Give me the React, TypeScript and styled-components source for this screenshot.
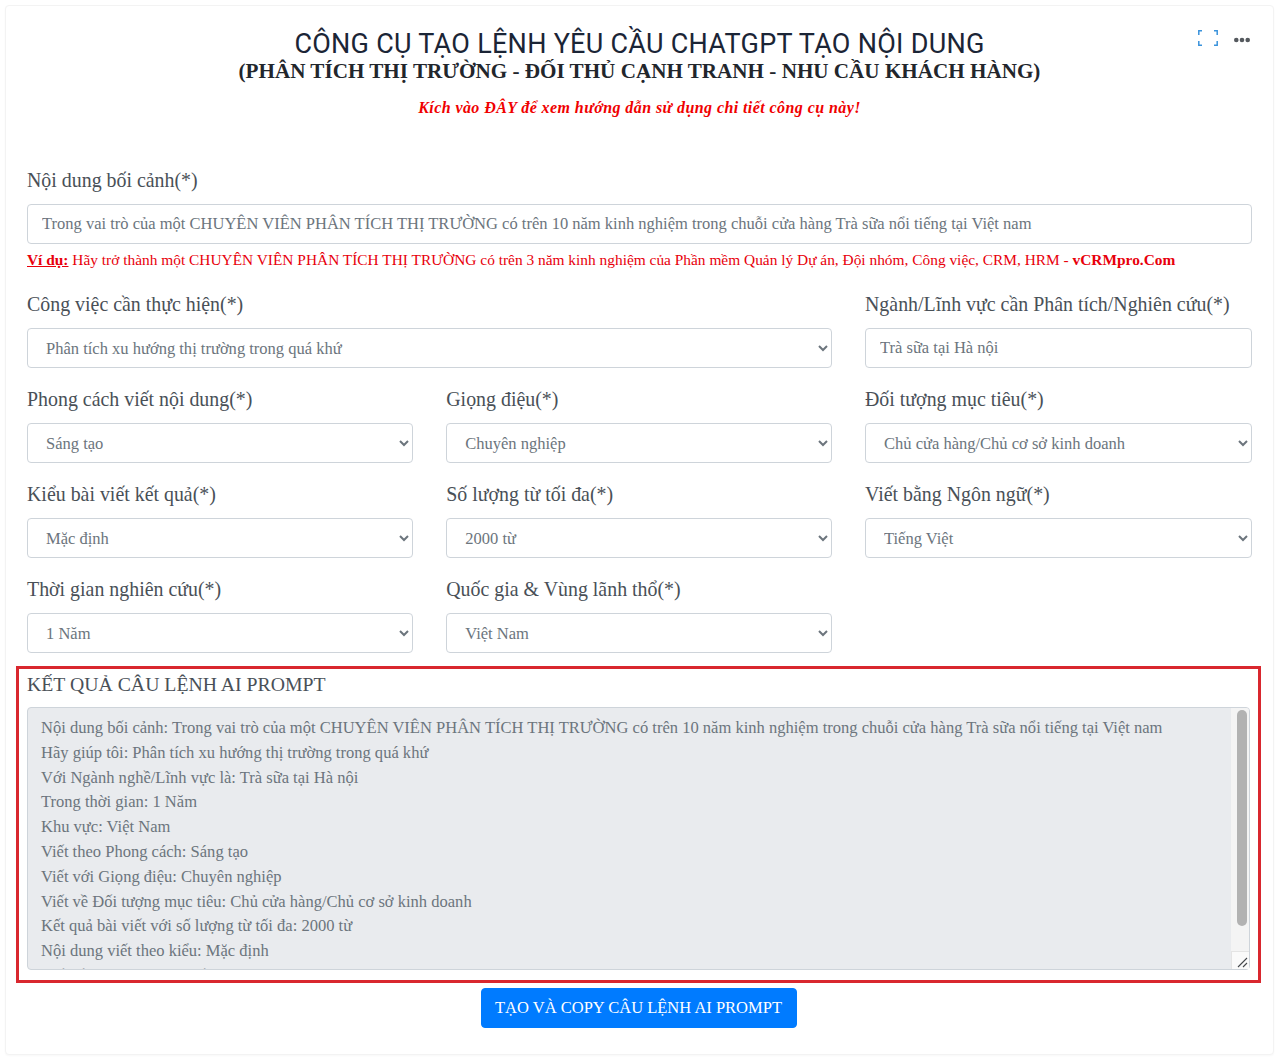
import React from 'react';
import styled, { createGlobalStyle } from 'styled-components';

const GlobalStyle = createGlobalStyle`
  html, body {
    margin: 0;
    padding: 0;
    background: #ffffff;
    font-family: "Liberation Serif", "Times New Roman", serif;
  }
  * {
    box-sizing: border-box;
  }
`;

const Page = styled.div`
  padding: 5px 6px 6px 5px;
  min-height: 1061px;
`;

const Card = styled.main`
  position: relative;
  height: 1050px;
  padding: 23px 21px 0 21px;
  background: #ffffff;
  border: 1px solid #f3f3f3;
  border-radius: 4px;
  box-shadow: 0 1px 2px rgba(0, 0, 0, 0.03);
`;

const Toolbar = styled.div`
  position: absolute;
  top: 24px;
  right: 23px;
  display: flex;
  align-items: center;
  gap: 16px;
`;

const Header = styled.header`
  text-align: center;
  height: 136px;
`;

const Title = styled.h1`
  margin: 0;
  font-family: "Roboto", "Liberation Sans", sans-serif;
  font-weight: 400;
  font-size: 27px;
  line-height: 30px;
  letter-spacing: 0.27px;
  color: #1b2536;
`;

const Subtitle = styled.h2`
  margin: 0 0 0 0;
  font-size: 21.13px;
  line-height: 25px;
  font-weight: 700;
  color: #22262c;
`;

const HelpLink = styled.a`
  display: block;
  margin-top: 12px;
  font-size: 16px;
  line-height: 24px;
  font-weight: 700;
  font-style: italic;
  letter-spacing: 0.42px;
  color: #f00000;
  text-decoration: none;
`;

const Field = styled.div`
  margin-bottom: 16px;
  min-width: 0;
`;

const Label = styled.label`
  display: block;
  height: 31px;
  margin-bottom: 8px;
  font-size: 19.9px;
  line-height: 30px;
  color: #495057;
`;

const TextInput = styled.input`
  display: block;
  width: 100%;
  height: 40px;
  padding: 6px 14px;
  font-family: inherit;
  font-size: 16.53px;
  color: #6c757d;
  background: #ffffff;
  border: 1px solid #ced4da;
  border-radius: 4px;
  outline: none;
`;

const Select = styled.select`
  display: block;
  width: 100%;
  height: 40px;
  padding: 6px 14px;
  font-family: inherit;
  font-size: 16.53px;
  color: #6c757d;
  background: #ffffff;
  border: 1px solid #ced4da;
  border-radius: 4px;
  outline: none;
`;

const Example = styled.p`
  margin: 6px 0 0;
  height: 23px;
  font-size: 15.4px;
  line-height: 20px;
  color: #e8000b;
`;

const ExampleTag = styled.strong`
  text-decoration: underline;
`;

const Grid = styled.div`
  display: grid;
  grid-template-columns: 386px 385.5px 387px;
  column-gap: 33.25px;
`;

const WideField = styled(Field)`
  grid-column: span 2;
`;

const ResultBox = styled.section`
  margin: -3px -9px 0 -11px;
  height: 317px;
  padding: 0 8px 0 8px;
  border: 3px solid #d9272e;
`;

const ResultLabel = styled(Label)`
  margin-bottom: 8px;
  height: 30px;
  font-size: 19.75px;
`;

const ResultWrap = styled.div`
  position: relative;
  height: 263px;
`;

const ResultText = styled.textarea`
  display: block;
  width: 100%;
  height: 100%;
  padding: 8px 32px 6px 13px;
  font-family: inherit;
  font-size: 16.55px;
  line-height: 24.8px;
  color: #6c757d;
  background: #e9ebee;
  border: 1px solid #ced4da;
  border-radius: 4px;
  outline: none;
  resize: none;
  overflow: hidden;
`;

const ScrollTrack = styled.div`
  position: absolute;
  top: 1px;
  right: 1px;
  bottom: 1px;
  width: 18px;
  display: flex;
  flex-direction: column;
  padding-top: 2px;
  background: #f4f4f4;
  border-radius: 0 3px 3px 0;
`;

const ScrollThumb = styled.div`
  width: 10px;
  height: 216px;
  margin-left: 4px;
  background: #b2b2b2;
  border-radius: 5px;
`;

const ResizeCorner = styled.div`
  display: flex;
  align-items: flex-end;
  justify-content: flex-end;
  height: 18px;
  margin-top: auto;
  background: #fafafa;
  border-top: 1px solid #e4e4e4;
  border-left: 1px solid #e4e4e4;
`;

const Actions = styled.div`
  display: flex;
  justify-content: center;
  margin-top: 5px;
  padding-right: 2px;
`;

const PrimaryButton = styled.button`
  width: 316px;
  height: 40px;
  padding: 0;
  font-family: inherit;
  font-size: 16.5px;
  color: #ffffff;
  background: #007bff;
  border: 1px solid #007bff;
  border-radius: 4px;
`;

const FullscreenIcon = () => (
  <svg width="20" height="16" viewBox="0 0 20 16" fill="none" stroke="#3a93dc" strokeWidth="1.5">
    <path d="M0.8 5V0.8H4M16 0.8H19.2V5M19.2 11V15.2H16M4 15.2H0.8V11" />
  </svg>
);

const MoreIcon = () => (
  <svg width="16" height="16" viewBox="0 0 16 16" fill="#55595e">
    <circle cx="2.3" cy="10" r="2.3" />
    <circle cx="8" cy="10" r="2.3" />
    <circle cx="13.7" cy="10" r="2.3" />
  </svg>
);

const ResizeGrip = () => (
  <svg width="14" height="14" viewBox="0 0 14 14" fill="none" stroke="#45484c" strokeWidth="1.1">
    <path d="M3 12L12 3M8 12L12 8" />
  </svg>
);

type SelectFieldProps = {
  label: string;
  value: string;
};

const SelectField: React.FC<SelectFieldProps> = ({ label, value }) => (
  <Field>
    <Label>{label}</Label>
    <Select defaultValue={value}>
      <option value={value}>{value}</option>
    </Select>
  </Field>
);

const promptLines = [
  'Nội dung bối cảnh: Trong vai trò của một CHUYÊN VIÊN PHÂN TÍCH THỊ TRƯỜNG có trên 10 năm kinh nghiệm trong chuỗi cửa hàng Trà sữa nổi tiếng tại Việt nam',
  'Hãy giúp tôi: Phân tích xu hướng thị trường trong quá khứ',
  'Với Ngành nghề/Lĩnh vực là: Trà sữa tại Hà nội',
  'Trong thời gian: 1 Năm',
  'Khu vực: Việt Nam',
  'Viết theo Phong cách: Sáng tạo',
  'Viết với Giọng điệu: Chuyên nghiệp',
  'Viết về Đối tượng mục tiêu: Chủ cửa hàng/Chủ cơ sở kinh doanh',
  'Kết quả bài viết với số lượng từ tối đa: 2000 từ',
  'Nội dung viết theo kiểu: Mặc định',
  'Viết bằng Ngôn ngữ: Tiếng Việt',
];

const App: React.FC = () => {
  return (
    <Page>
      <GlobalStyle />
      <Card>
        <Toolbar>
          <FullscreenIcon />
          <MoreIcon />
        </Toolbar>

        <Header>
          <Title>CÔNG CỤ TẠO LỆNH YÊU CẦU CHATGPT TẠO NỘI DUNG</Title>
          <Subtitle>(PHÂN TÍCH THỊ TRƯỜNG - ĐỐI THỦ CẠNH TRANH - NHU CẦU KHÁCH HÀNG)</Subtitle>
          <HelpLink href="#">Kích vào ĐÂY để xem hướng dẫn sử dụng chi tiết công cụ này!</HelpLink>
        </Header>

        <Field>
          <Label>Nội dung bối cảnh(*)</Label>
          <TextInput
            readOnly
            value="Trong vai trò của một CHUYÊN VIÊN PHÂN TÍCH THỊ TRƯỜNG có trên 10 năm kinh nghiệm trong chuỗi cửa hàng Trà sữa nổi tiếng tại Việt nam"
          />
          <Example>
            <ExampleTag>Ví dụ:</ExampleTag> Hãy trở thành một CHUYÊN VIÊN PHÂN TÍCH THỊ TRƯỜNG có trên 3 năm kinh nghiệm của Phần mềm Quản lý Dự án, Đội nhóm, Công việc, CRM, HRM - <strong>vCRMpro.Com</strong>
          </Example>
        </Field>

        <Grid>
          <WideField>
            <Label>Công việc cần thực hiện(*)</Label>
            <Select defaultValue="a">
              <option value="a">Phân tích xu hướng thị trường trong quá khứ</option>
            </Select>
          </WideField>
          <Field>
            <Label>Ngành/Lĩnh vực cần Phân tích/Nghiên cứu(*)</Label>
            <TextInput readOnly value="Trà sữa tại Hà nội" />
          </Field>

          <SelectField label="Phong cách viết nội dung(*)" value="Sáng tạo" />
          <SelectField label="Giọng điệu(*)" value="Chuyên nghiệp" />
          <SelectField label="Đối tượng mục tiêu(*)" value="Chủ cửa hàng/Chủ cơ sở kinh doanh" />

          <SelectField label="Kiểu bài viết kết quả(*)" value="Mặc định" />
          <SelectField label="Số lượng từ tối đa(*)" value="2000 từ" />
          <SelectField label="Viết bằng Ngôn ngữ(*)" value="Tiếng Việt" />

          <SelectField label="Thời gian nghiên cứu(*)" value="1 Năm" />
          <SelectField label="Quốc gia & Vùng lãnh thổ(*)" value="Việt Nam" />
        </Grid>

        <ResultBox>
          <ResultLabel>KẾT QUẢ CÂU LỆNH AI PROMPT</ResultLabel>
          <ResultWrap>
            <ResultText readOnly value={promptLines.join('\n')} />
            <ScrollTrack>
              <ScrollThumbSlot />
              <ResizeCorner>
                <ResizeGrip />
              </ResizeCorner>
            </ScrollTrack>
          </ResultWrap>
        </ResultBox>

        <Actions>
          <PrimaryButton>TẠO VÀ COPY CÂU LỆNH AI PROMPT</PrimaryButton>
        </Actions>
      </Card>
    </Page>
  );
};

const ScrollThumbSlot = styled(ScrollThumb)`
  margin-left: 6px;
`;

export default App;
